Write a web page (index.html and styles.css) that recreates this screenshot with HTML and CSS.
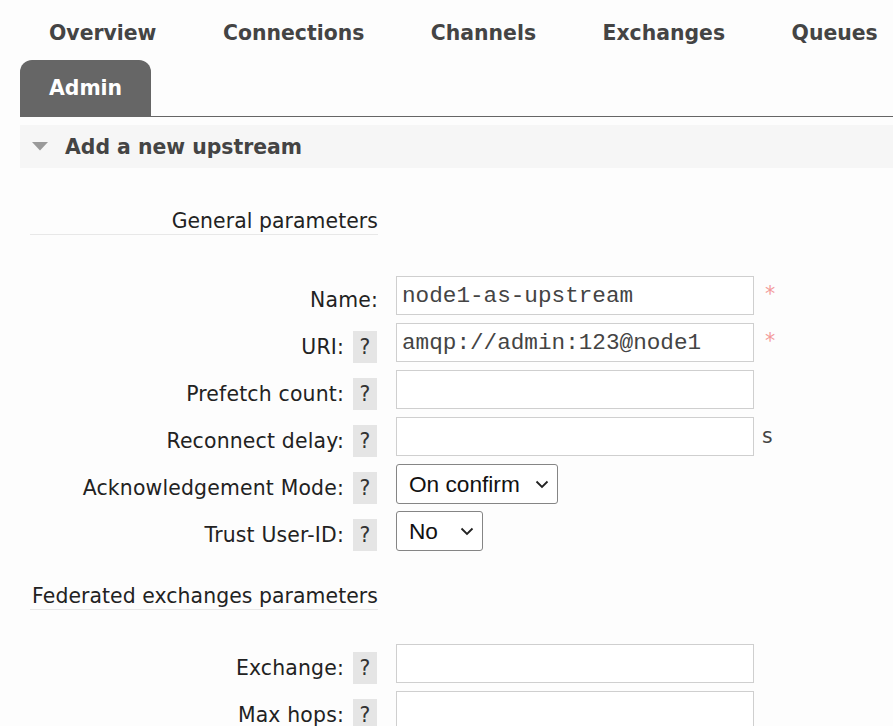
FILE: index.html
```html
<!DOCTYPE html>
<html lang="en">
<head>
<meta charset="utf-8">
<title>Federation Upstreams</title>
<link rel="stylesheet" href="styles.css">
</head>
<body>
<div class="page">
  <ul class="tabs">
    <li><a href="#">Overview</a></li>
    <li><a href="#">Connections</a></li>
    <li><a href="#">Channels</a></li>
    <li><a href="#">Exchanges</a></li>
    <li><a href="#">Queues</a></li>
    <li class="active"><a href="#">Admin</a></li>
  </ul>

  <div class="section">
    <h2 class="section-head">
      <svg class="arrow" width="16" height="9" viewBox="0 0 16 9"><polygon points="0,0 16,0 8,8.5" fill="#9a9a9a"/></svg>
      Add a new upstream
    </h2>

    <div class="form">
      <h3 class="group first">General parameters</h3>

      <div class="row">
        <label class="lbl">Name:</label>
        <input class="text" type="text" value="node1-as-upstream">
        <span class="mand">*</span>
      </div>
      <div class="row">
        <label class="lbl">URI:<span class="help">?</span></label>
        <input class="text" type="text" value="amqp://admin:123@node1">
        <span class="mand">*</span>
      </div>
      <div class="row">
        <label class="lbl">Prefetch count:<span class="help">?</span></label>
        <input class="text" type="text" value="">
      </div>
      <div class="row">
        <label class="lbl">Reconnect delay:<span class="help">?</span></label>
        <input class="text" type="text" value="">
        <span class="unit">s</span>
      </div>
      <div class="row">
        <label class="lbl">Acknowledgement Mode:<span class="help">?</span></label>
        <span class="select-wrap">
          <select class="select select-ack">
            <option>On confirm</option>
            <option>On publish</option>
            <option>No ack</option>
          </select>
          <svg class="chev" width="14" height="9" viewBox="0 0 14 9"><polyline points="1.5,1.5 7,7 12.5,1.5" fill="none" stroke="#222" stroke-width="1.8"/></svg>
        </span>
      </div>
      <div class="row">
        <label class="lbl">Trust User-ID:<span class="help">?</span></label>
        <span class="select-wrap">
          <select class="select select-bool">
            <option>No</option>
            <option>Yes</option>
          </select>
          <svg class="chev" width="14" height="9" viewBox="0 0 14 9"><polyline points="1.5,1.5 7,7 12.5,1.5" fill="none" stroke="#222" stroke-width="1.8"/></svg>
        </span>
      </div>

      <h3 class="group second">Federated exchanges parameters</h3>

      <div class="row">
        <label class="lbl">Exchange:<span class="help">?</span></label>
        <input class="text" type="text" value="">
      </div>
      <div class="row">
        <label class="lbl">Max hops:<span class="help">?</span></label>
        <input class="text" type="text" value="">
      </div>
    </div>
  </div>
</div>
</body>
</html>
```

FILE: styles.css
```css
html, body {
  margin: 0;
  padding: 0;
  overflow: hidden;
  background: #fdfdfd;
}

body {
  font-family: "DejaVu Sans", Verdana, sans-serif;
  font-size: 20.4px;
  color: #222;
}

.page {
  width: 980px;
}

/* Tabs */
.tabs {
  list-style: none;
  margin: 4px 0 0 20px;
  padding: 0;
  display: flex;
  flex-wrap: wrap;
  width: 960px;
  border-bottom: 1px solid #666;
}

.tabs li {
  margin-right: 8.5px;
}

.tabs a {
  display: block;
  height: 56px;
  line-height: 56px;
  padding: 0 29px;
  font-weight: bold;
  color: #444;
  text-decoration: none;
}

.tabs li:not(.active) a {
  line-height: 59px;
}

.tabs li.active a {
  background: #666;
  color: #fff;
  border-radius: 12px 12px 0 0;
}

/* Section */
.section {
  margin: 8px 0 0 20px;
}

.section-head {
  margin: 0;
  height: 43px;
  display: flex;
  align-items: center;
  padding-left: 12px;
  background: #f6f6f6;
  font-size: 20.4px;
  font-weight: bold;
  color: #444;
}

.arrow {
  margin-right: 17px;
  flex: none;
}

/* Form */
.form {
  margin-left: 10px;
}

.group {
  width: 348px;
  margin: 0;
  font-size: 20.4px;
  font-weight: normal;
  line-height: 24px;
  text-align: right;
  white-space: nowrap;
  letter-spacing: 0.07px;
  padding-bottom: 1px;
  border-bottom: 1px solid #e8e8e8;
  color: #222;
}

.group.first {
  margin-top: 41px;
  margin-bottom: 41px;
}

.group.second {
  margin-top: 34px;
  margin-bottom: 34px;
}

.row {
  display: flex;
  align-items: flex-start;
  height: 39px;
  margin-bottom: 8px;
}

.lbl {
  width: 348px;
  flex: none;
  height: 32px;
  margin-top: 8px;
  display: flex;
  justify-content: flex-end;
  align-items: center;
  line-height: 32px;
  letter-spacing: 0.18px;
  white-space: nowrap;
  color: #222;
}

.help {
  display: inline-block;
  width: 24px;
  height: 32px;
  line-height: 32px;
  margin-left: 9px;
  margin-right: 1px;
  text-align: center;
  letter-spacing: 0;
  background: #e5e5e5;
  color: #333;
}

.text {
  box-sizing: border-box;
  width: 358px;
  height: 39px;
  margin: 0 0 0 18px;
  padding: 0 5px;
  border: 1px solid #cfcfcf;
  background: #fff;
  font-family: "Liberation Mono", "Courier New", monospace;
  font-size: 22.67px;
  color: #444;
  outline: none;
}

.mand {
  margin-left: 11px;
  color: #f39a9a;
  line-height: 32px;
  margin-top: 2px;
}

.unit {
  margin-left: 8px;
  color: #444;
  line-height: 39px;
  height: 39px;
}

.select-wrap {
  position: relative;
  display: inline-block;
  margin-left: 18px;
}

.select {
  -webkit-appearance: none;
  appearance: none;
  box-sizing: border-box;
  height: 40px;
  margin: 0;
  padding: 0 0 0 12px;
  border: 1px solid #858585;
  border-radius: 3px;
  background: #fff;
  font-family: "Liberation Sans", Arial, sans-serif;
  font-size: 22.67px;
  color: #111;
  display: block;
}

.select-ack {
  width: 162px;
}

.select-bool {
  width: 87px;
}

.chev {
  position: absolute;
  right: 9px;
  top: 16px;
  pointer-events: none;
}
```
